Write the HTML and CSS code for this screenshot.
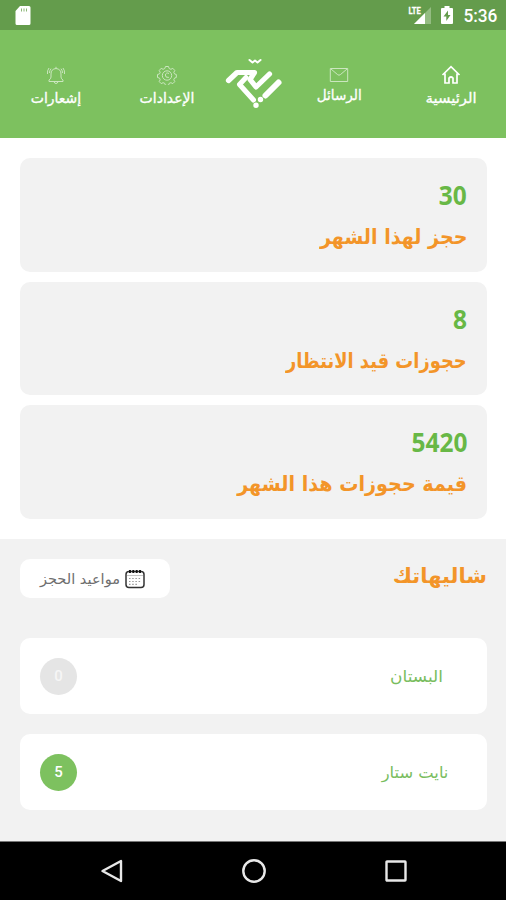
FILE: index.html
```html
<!DOCTYPE html>
<html lang="ar" dir="rtl">
<head>
<meta charset="utf-8">
<title>لوحة الحجوزات</title>
<link rel="stylesheet" href="styles.css">
</head>
<body>
<div class="status" dir="ltr">
  <svg class="sd" width="16" height="19" viewBox="0 0 16 19"><path d="M5 0h9a1.500 1.500 0 0 1 1.500 1.500v16A1.500 1.500 0 0 1 14 19H2a1.500 1.500 0 0 1-1.500-1.500V5Z" fill="#fff"/><path d="M6.500 2.500v3M9 2.500v3M11.500 2.500v3" stroke="#8bb676" stroke-width="1"/></svg>
  <div class="status-right">
    <span class="lte">LTE</span>
    <svg class="signal" width="18" height="17" viewBox="0 0 18 17"><path d="M0 17 17 0v17Z" fill="#94bc82"/><path d="M0 17 11 6v11Z" fill="#fff"/></svg>
    <svg class="battery" width="12" height="18" viewBox="0 0 12 18"><path d="M3.500 0h5v2H11a1 1 0 0 1 1 1v14a1 1 0 0 1-1 1H1a1 1 0 0 1-1-1V3a1 1 0 0 1 1-1h2.500Z" fill="#fff"/><path d="M7 4.500 2.500 10.500H5.300V15l4.200-6H7Z" fill="#649c4c"/></svg>
    <span class="clock">5:36</span>
  </div>
</div>
<header class="header">
  <div class="tab active">
    <svg width="20" height="20" viewBox="0 0 20 20"><path d="M1.500 10 10 1.700 18.500 10M4 8.500V18h4v-5q2-2 4 0v5h4V8.500"/></svg>
    <span class="fit home">الرئيسية</span>
  </div>
  <div class="tab mail-tab">
    <svg width="20" height="20" viewBox="0 0 20 20"><path d="M1.300 3.500h17.400v13H1.300ZM2 4l6.700 5.700q1.300 1 2.600 0L18 4"/></svg>
    <span class="fit messages">الرسائل</span>
  </div>
  <svg class="logo" width="60" height="54" viewBox="0 0 60 54">
    <g fill="none" stroke="#fff" stroke-linecap="round" stroke-linejoin="round">
      <path d="M25.500 4 28.500 6.500l2.500-2 2.500 2L36.500 4" stroke-width="2"/>
      <path d="M4.500 24.500 13 16.500H30.500L26 23.500l6 7.500L45.500 18" stroke-width="5.200"/>
      <path d="M22 21.500 15.500 28.500 29.500 44" stroke-width="5"/>
      <path d="M20.500 27 32.500 39" stroke-width="0"/>
      <path d="M54.500 26.500 41.500 39.500" stroke-width="6"/>
      <path d="M36.500 43.500h.01M32 49.200h.01" stroke-width="5.400"/>
    </g>
  </svg>
  <div class="tab">
    <svg width="20" height="20" viewBox="0 0 20 20"><path d="m8.500 1.500 3 0 .6 2 1.800.8 1.900-1 2 2.200-1 1.800.7 1.600 1.800.6v3l-1.800.6-.7 1.700 1 1.800-2 2-1.900-.9-1.800.7-.6 2h-3l-.7-2-1.700-.7-1.900.9-2-2 1-1.800-.7-1.700-2-.6v-3l2-.6.7-1.600-1-1.800 2-2.200 1.900 1 1.700-.8Z"/><circle cx="10" cy="10.500" r="4.700"/><path d="M12 8.500q-3-1.500-3.600 1.500-.2 3 3.500 2.400"/></svg>
    <span class="fit settings">الإعدادات</span>
  </div>
  <div class="tab">
    <svg width="20" height="20" viewBox="0 0 20 20"><path d="M3 16.500V15q2-1 2-3V9q0-5 5-5.500 5 .5 5 5.500v3q0 2 2 3v1.500ZM8 16.500q.3 2 2 2t2-2M10 3.500V1.800M3 3Q1 5.500 1.500 9M5 3.700Q3.500 5.500 3.500 8M17 3q2 2.500 1.500 6M15 3.700q1.500 1.800 1.500 4.300"/></svg>
    <span class="fit alerts">إشعارات</span>
  </div>
</header>
<section class="stats">
  <div class="card"><b class="number">30</b><span class="fit title t1">حجز لهذا الشهر</span></div>
  <div class="card"><b class="number">8</b><span class="fit title t2">حجوزات قيد الانتظار</span></div>
  <div class="card"><b class="number">5420</b><span class="fit title t3">قيمة حجوزات هذا الشهر</span></div>
</section>
<section class="chalets">
  <div class="heading">
    <span class="fit title t4">شاليهاتك</span>
    <div class="dates">
      <svg width="20" height="20" viewBox="0 0 20 20"><rect x="1" y="2.500" width="18" height="16" rx="3" fill="none" stroke="#333" stroke-width="1.500"/><path d="M2 6.500h16" stroke="#aaa" stroke-width=".7"/><path d="M5 1v3M8.300 1v3M11.700 1v3M15 1v3" stroke="#111" stroke-width="1.900"/><path d="M4 9.500h12M4 12.500h12M4 15.300h9" stroke="#999" stroke-width="1.200" stroke-dasharray="1.500 1.700"/></svg>
      <span class="fit booking">مواعيد الحجز</span>
    </div>
  </div>
  <div class="row first"><span class="fit name n1">البستان</span><span class="badge empty">0</span></div>
  <div class="row"><span class="fit name n2">نايت ستار</span><span class="badge">5</span></div>
</section>
<nav class="nav" dir="ltr">
  <svg width="24" height="24" viewBox="0 0 24 24"><path d="M21 2v20L2.500 12Z"/></svg>
  <svg width="24" height="24" viewBox="0 0 24 24"><circle cx="12" cy="12" r="10.700"/></svg>
  <svg width="24" height="24" viewBox="0 0 24 24"><rect x="2.500" y="2.500" width="19" height="19" rx=".5"/></svg>
</nav>
</body>
</html>
```
FILE: styles.css
```css
* { box-sizing: border-box; }
body { margin: 0; width: 506px; height: 900px; overflow: hidden; background: #fff; font-family: "DejaVu Sans", sans-serif; }
svg { display: block; flex: none; }
.fit { display: block; white-space: nowrap; }
.status { height: 30px; background: #649c4c; display: flex; justify-content: space-between; padding: 0 9px 0 15px; color: #fff; }
.sd { margin-top: 6px; }
.status-right { display: flex; }
.lte { font: 700 9.500px/10px Roboto, sans-serif; margin: 6px -9px 0 0; transform: scaleX(.8); -webkit-text-stroke: .3px #fff; }
.signal { margin: 7px 9px 0 0; }
.battery { margin: 6px 9px 0 0; }
.clock { font: 500 18px/31px Roboto, sans-serif; transform: scaleX(.96); transform-origin: right center; }
.header { height: 108px; background: #7dc15f; display: grid; grid-template-columns: 110px 114px 56px 118px 104px; }
.tab { display: flex; flex-direction: column; align-items: center; padding-top: 35px; color: #fff; font-size: 14px; line-height: 20px; -webkit-text-stroke: .3px #fff; }
.tab svg { fill: none; stroke: #fff; stroke-width: 1; opacity: .6; }
.tab.active svg { stroke-width: 1.7; opacity: 1; }
.tab .fit { margin-top: 3px; }
.mail-tab .fit { margin-top: 0; }
.home { transform: scaleX(1.06); }
.messages { transform: scaleX(.97); }
.logo { justify-self: center; margin-top: 26px; }
.stats { padding: 20px 19px 20px 20px; height: 401px; display: flex; flex-direction: column; gap: 10px; }
.card { flex: 1; background: #f2f2f2; border-radius: 10px; padding: 18px 20px 0; display: flex; flex-direction: column; align-items: flex-start; }
.number { color: #68b846; font: 700 26px/38px "Noto Sans", sans-serif; transform: scaleX(.94); transform-origin: right center; }
.title { color: #f39529; font-weight: 700; font-size: 21px; line-height: 32px; transform-origin: right center; }
.card .title { margin-top: 7px; }
.t1 { transform: scaleX(.908); }
.t2 { transform: scaleX(.85); }
.t3 { transform: scaleX(.912); }
.t4 { transform: translateY(-3px); }
.chalets { background: #f2f2f2; height: 302px; padding: 20px 19px 0 20px; }
.heading { height: 39px; display: flex; justify-content: space-between; align-items: center; }
.dates { width: 150px; height: 39px; border-radius: 10px; background: #fff; display: flex; align-items: center; padding-right: 25px; gap: 5px; color: #6e6e6e; font-size: 14px; }
.booking { transform: scaleX(1.04); transform-origin: right center; }
.row { background: #fff; height: 76px; border-radius: 10px; display: flex; justify-content: space-between; align-items: center; padding: 0 39px 0 20px; margin-top: 20px; }
.row.first { margin-top: 40px; padding-right: 44px; }
.name { color: #79bd5e; font-size: 16px; transform-origin: right center; }
.n1 { transform: scaleX(1.06); }
.n2 { transform: scaleX(1.02); }
.badge { width: 37px; height: 37px; border-radius: 50%; background: #7dc15f; color: #fff; display: grid; place-items: center; font: 500 15px/37px Roboto, sans-serif; }
.badge.empty { background: #e5e5e5; color: #f6f6f6; }
.nav { height: 59px; background: #000; border-top: 1px solid #777; display: flex; justify-content: space-between; padding: 17px 98px 0 100px; }
.nav svg { fill: none; stroke: #e8e8e8; stroke-width: 2.400; stroke-linejoin: round; }
```
